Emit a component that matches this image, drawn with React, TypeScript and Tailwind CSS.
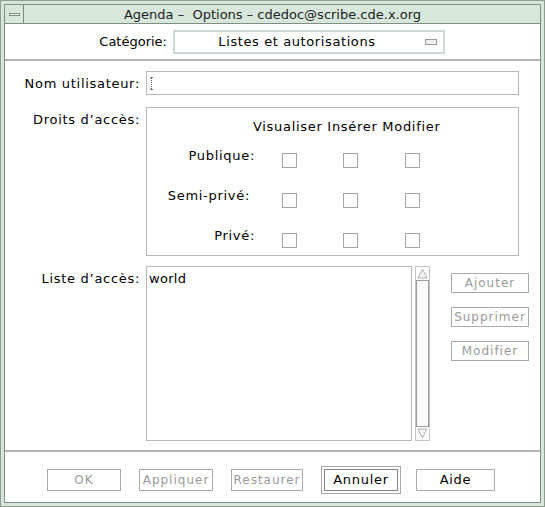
const font = { fontFamily: '"DejaVu Sans", "Liberation Sans", sans-serif' };

function DimButton({ label, w, h }: { label: string; w: string; h: string }) {
  return (
    <div className={`${w} ${h} border border-[#a9a9a9] bg-white flex items-center justify-center text-[12px] text-[#9a9a9a] tracking-[1px]`}>
      {label}
    </div>
  );
}

function Box() {
  return <div className="w-[15px] h-[15px] border border-[#a6a6a6] bg-white" />;
}

function PermRow({ label, shift }: { label: string; shift?: string }) {
  return (
    <div className="grid grid-cols-[111px_62px_61px_62px] h-[40px] items-start">
      <div className={`text-right pr-[3px] leading-[16px] ${shift ?? ''}`}>{label}</div>
      <div className="flex justify-center pt-[5px]"><Box /></div>
      <div className="flex justify-center pt-[5px]"><Box /></div>
      <div className="flex justify-center pt-[5px]"><Box /></div>
    </div>
  );
}

export default function App() {
  return (
    <div style={font} className="w-[545px] h-[507px] bg-[#d8e7dc] border border-[#8e9c92] px-[3px] pt-[3px] pb-[3px] flex flex-col text-[13px] text-black">
      {/* title bar */}
      <div className="h-[20px] flex border border-[#7f8d83] shrink-0">
        <div className="w-[19px] border-r border-[#7f8d83] flex items-center justify-center">
          <div className="w-[11px] h-[3px] border border-[#7f8d83] bg-[#eef5f0]" />
        </div>
        <div className="flex-1 flex items-center justify-center text-[#222] pr-[19px] leading-none">
          Agenda –&nbsp; Options – cdedoc@scribe.cde.x.org
        </div>
      </div>

      {/* content */}
      <div className="flex-1 bg-white border-l border-r border-b border-[#7f8d83] flex flex-col">
        <div className="h-[37px] flex items-center shrink-0 border-b-2 border-[#b4b4b4] pt-[1px]">
          <div className="w-[168px] text-right pr-[6px]">Catégorie:</div>
          <div className="w-[272px] h-[24px] border-2 border-[#cdd8d0] flex items-center relative">
            <div className="flex-1 text-center pr-[24px] tracking-[0.6px]">Listes et autorisations</div>
            <div className="absolute right-[6px] top-[7px] w-[12px] h-[6px] border border-[#9a9a9a] bg-[#f0f0f0]" />
          </div>
        </div>

        <div className="flex flex-col pt-[10px] tracking-[0.7px]">
          {/* nom */}
          <div className="flex">
            <div className="w-[135px] text-right pt-[3px]">Nom utilisateur:</div>
            <div className="ml-[6px] w-[373px] h-[24px] border border-[#b8b8b8] flex items-center pl-[3px]">
              <div className="w-[3px] h-[13px] border-t border-b border-[#777] flex justify-center">
                <div className="w-px h-full border-l border-dotted border-[#555]" />
              </div>
            </div>
          </div>

          {/* droits */}
          <div className="flex mt-[12px]">
            <div className="w-[135px] text-right pt-[3px]">Droits d’accès:</div>
            <div className="ml-[6px] w-[373px] h-[149px] border border-[#b8b8b8] pt-[11px] flex flex-col">
              <div className="h-[16px] leading-[16px] whitespace-nowrap pl-[106px]">
                Visualiser Insérer Modifier
              </div>
              <div className="mt-[13px]">
                <PermRow label="Publique:" />
                <PermRow label="Semi-privé:" shift="mr-[5px]" />
                <PermRow label="Privé:" />
              </div>
            </div>
          </div>

          {/* liste */}
          <div className="flex mt-[10px]">
            <div className="w-[135px] text-right pt-[3px]">Liste d’accès:</div>
            <div className="ml-[6px] w-[266px] h-[175px] border border-[#b8b8b8] pl-[2px] pt-[2px] tracking-[0.3px]">world</div>
            <div className="ml-[3px] w-[15px] h-[175px] border border-[#c4c4c4] flex flex-col">
              <svg width="13" height="13" viewBox="0 0 13 13" className="shrink-0">
                <polygon points="6.5,2 11,11 2,11" fill="#f4f4f4" stroke="#b0b0b0" />
              </svg>
              <div className="flex-1 border border-[#9c9c9c] bg-[#fafafa]" />
              <svg width="13" height="13" viewBox="0 0 13 13" className="shrink-0">
                <polygon points="2,2 11,2 6.5,11" fill="#f4f4f4" stroke="#b0b0b0" />
              </svg>
            </div>
            <div className="ml-[21px] mt-[7px] flex flex-col gap-[14px]">
              <DimButton label="Ajouter" w="w-[78px]" h="h-[20px]" />
              <DimButton label="Supprimer" w="w-[78px]" h="h-[20px]" />
              <DimButton label="Modifier" w="w-[78px]" h="h-[20px]" />
            </div>
          </div>
        </div>

        <div className="mt-auto h-[52px] border-t-2 border-[#b4b4b4] flex items-center pl-[42px] pt-[5px]">
          <DimButton label="OK" w="w-[74px]" h="h-[22px]" />
          <div className="ml-[18px]"><DimButton label="Appliquer" w="w-[74px]" h="h-[22px]" /></div>
          <div className="ml-[18px]"><DimButton label="Restaurer" w="w-[72px]" h="h-[22px]" /></div>
          <div className="ml-[18px] w-[80px] h-[28px] border border-[#a9a9a9] p-[2px]">
            <div className="w-full h-full border border-[#888] flex items-center justify-center tracking-[0.7px]">Annuler</div>
          </div>
          <div className="ml-[15px] w-[79px] h-[22px] border border-[#a9a9a9] flex items-center justify-center tracking-[0.7px]">Aide</div>
        </div>
      </div>
    </div>
  );
}
